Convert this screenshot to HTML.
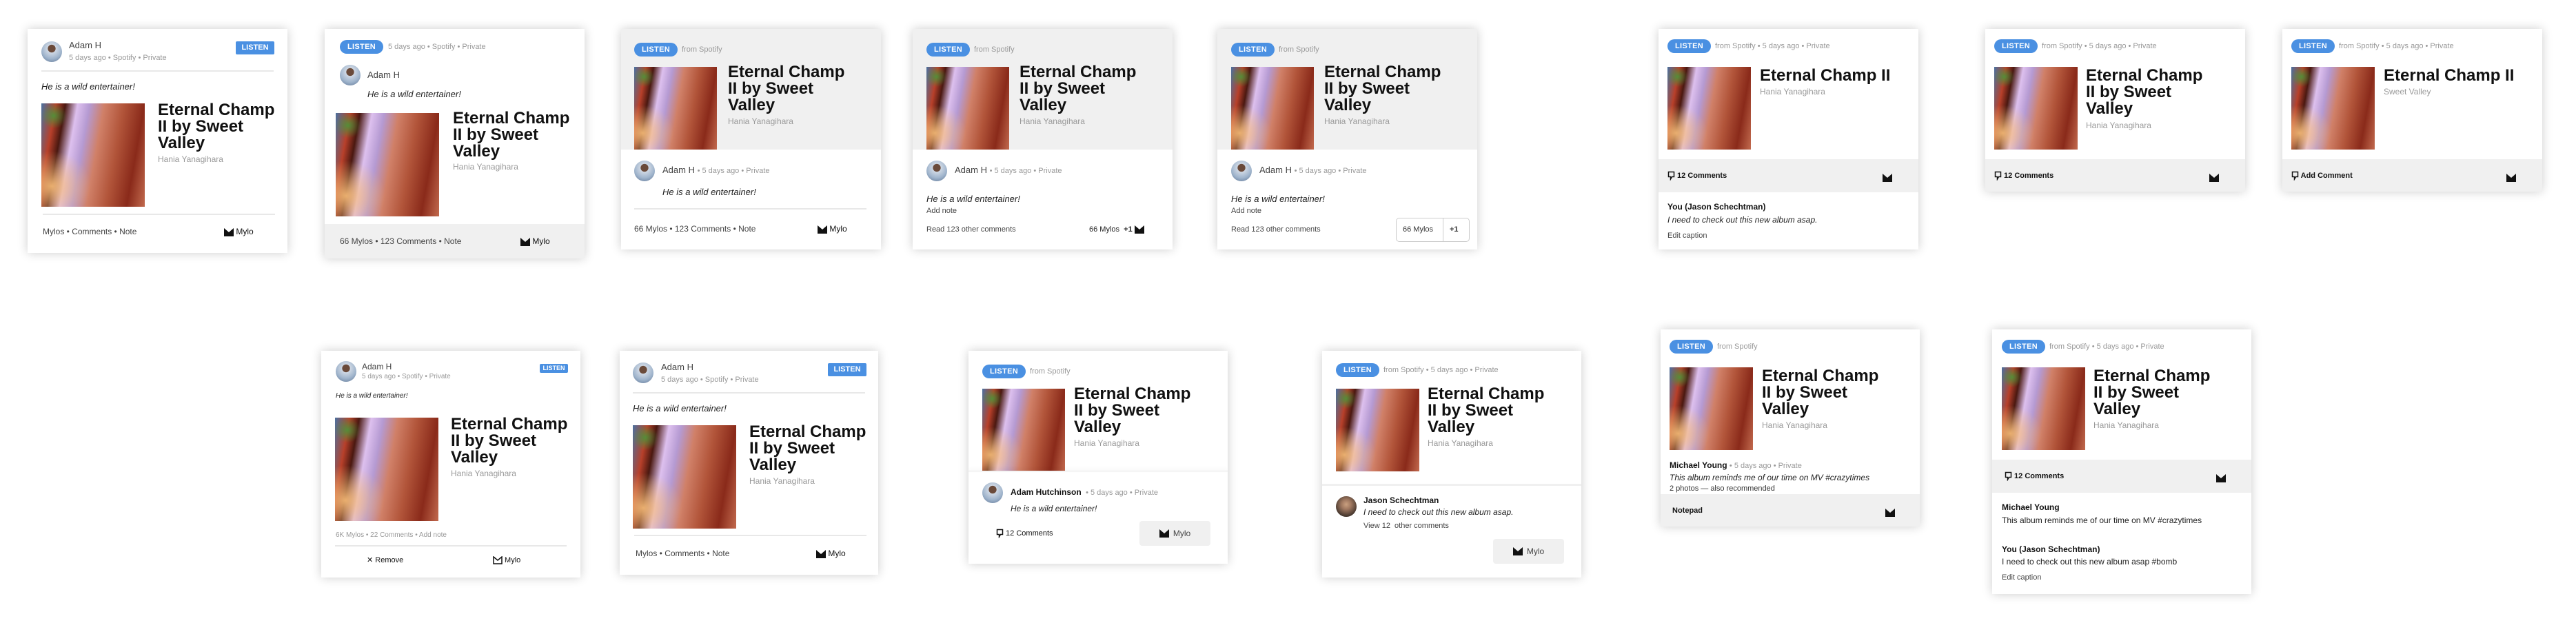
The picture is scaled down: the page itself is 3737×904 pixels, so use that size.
<!DOCTYPE html>
<html><head><meta charset="utf-8">
<style>
*{margin:0;padding:0;box-sizing:border-box}
body{width:3737px;height:904px;background:#fff;position:relative;overflow:hidden;font-family:"Liberation Sans",Arial,sans-serif;color:#222}
.c{position:absolute;background:#fff;box-shadow:0 0 14px rgba(0,0,0,.2);overflow:hidden}
.a{position:absolute}
.t{position:absolute;white-space:nowrap;font-size:11px;line-height:16px;color:#999}
.g{position:absolute;background:#f0f0f0;left:0;right:0}
.pill{position:absolute;background:#4a90e2;color:#fff;font-size:11px;font-weight:bold;border-radius:10px;height:20px;line-height:20px;text-align:center;width:63px;letter-spacing:.3px}
.box{position:absolute;background:#4a90e2;color:#fff;font-size:11px;font-weight:bold;text-align:center;border-radius:2px}
.img{position:absolute;background:
radial-gradient(circle at 12% 12%,rgba(60,160,60,.8) 0,rgba(60,160,60,0) 10%),
radial-gradient(ellipse at 10% 80%,rgba(250,190,120,.9) 0,rgba(250,190,120,0) 30%),
linear-gradient(100deg,#4a72a0 0%,#b8402a 12%,#4a1810 20%,#ddc0ee 30%,#b59ad2 40%,#d08068 52%,#b2553a 68%,#8a2a1a 85%,#c26a4e 100%)}
.av{position:absolute;width:30px;height:30px;border-radius:50%;background:radial-gradient(circle at 50% 35%,#6a4a3a 0,#6a4a3a 22%,#cfd8e4 24%,#9fb4cc 60%,#5a7090 100%)}
.ti{position:absolute;font-size:24px;line-height:24px;font-weight:bold;color:#111}
.au{position:absolute;font-size:12px;line-height:16px;color:#999;white-space:nowrap}
.nm{position:absolute;font-size:13px;line-height:16px;color:#444;white-space:nowrap}
.it{position:absolute;font-size:13px;line-height:16px;color:#222;font-style:italic;white-space:nowrap}
.ft{position:absolute;font-size:12px;line-height:16px;color:#444;white-space:nowrap}
.b{position:absolute;font-size:12px;line-height:16px;color:#111;font-weight:bold;white-space:nowrap}
.hr{position:absolute;height:2px;background:#e8e8e8}
.btn{position:absolute;background:#f0f0f0;border-radius:4px;font-size:12px;color:#444;display:flex;align-items:center;justify-content:center;gap:6px}
svg{display:inline-block;vertical-align:middle}
</style></head><body>

<!-- C1 -->
<div class="c" style="left:40px;top:42px;width:377px;height:325px">
 <div class="av" style="left:20px;top:18px"></div>
 <div class="nm" style="left:60px;top:16px">Adam H</div>
 <div class="t" style="left:60px;top:34px">5 days ago • Spotify • Private</div>
 <div class="box" style="left:302px;top:18px;width:56px;height:19px;line-height:19px">LISTEN</div>
 <div class="hr" style="left:20px;top:60px;width:337px"></div>
 <div class="it" style="left:20px;top:76px">He is a wild entertainer!</div>
 <div class="img" style="left:20px;top:108px;width:150px;height:150px"></div>
 <div class="ti" style="left:189px;top:106px">Eternal Champ<br>II by Sweet<br>Valley</div>
 <div class="au" style="left:189px;top:181px">Hania Yanagihara</div>
 <div class="hr" style="left:22px;top:268px;width:337px"></div>
 <div class="ft" style="left:22px;top:286px">Mylos • Comments • Note</div>
 <div class="ft" style="left:285px;top:286px;color:#111"><svg width="14" height="12"><path d="M0 0L7 6L14 0V12H0Z" fill="#111"/></svg> Mylo</div>
</div>

<!-- C2 -->
<div class="c" style="left:471px;top:42px;width:377px;height:333px">
 <div class="pill" style="left:22px;top:16px">LISTEN</div>
 <div class="t" style="left:92px;top:18px">5 days ago • Spotify • Private</div>
 <div class="av" style="left:22px;top:52px"></div>
 <div class="nm" style="left:62px;top:59px">Adam H</div>
 <div class="it" style="left:62px;top:87px">He is a wild entertainer!</div>
 <div class="img" style="left:16px;top:122px;width:150px;height:150px"></div>
 <div class="ti" style="left:186px;top:118px">Eternal Champ<br>II by Sweet<br>Valley</div>
 <div class="au" style="left:186px;top:192px">Hania Yanagihara</div>
 <div class="g" style="top:283px;height:50px"></div>
 <div class="ft" style="left:22px;top:300px">66 Mylos • 123 Comments • Note</div>
 <div class="ft" style="left:284px;top:300px;color:#111"><svg width="14" height="12"><path d="M0 0L7 6L14 0V12H0Z" fill="#111"/></svg> Mylo</div>
</div>

<!-- C3 -->
<div class="c" style="left:901px;top:42px;width:377px;height:320px">
 <div class="g" style="top:0;height:175px"></div>
 <div class="pill" style="left:19px;top:20px">LISTEN</div>
 <div class="t" style="left:88px;top:22px">from Spotify</div>
 <div class="img" style="left:19px;top:55px;width:120px;height:120px"></div>
 <div class="ti" style="left:155px;top:51px">Eternal Champ<br>II by Sweet<br>Valley</div>
 <div class="au" style="left:155px;top:126px">Hania Yanagihara</div>
 <div class="av" style="left:19px;top:191px"></div>
 <div class="nm" style="left:60px;top:197px">Adam H <span style="font-size:11px;color:#999">• 5 days ago • Private</span></div>
 <div class="it" style="left:60px;top:229px">He is a wild entertainer!</div>
 <div class="hr" style="left:19px;top:260px;width:337px"></div>
 <div class="ft" style="left:19px;top:282px">66 Mylos • 123 Comments • Note</div>
 <div class="ft" style="left:285px;top:282px;color:#111"><svg width="14" height="12"><path d="M0 0L7 6L14 0V12H0Z" fill="#111"/></svg> Mylo</div>
</div>

<!-- C4 -->
<div class="c" style="left:1324px;top:42px;width:377px;height:320px">
 <div class="g" style="top:0;height:175px"></div>
 <div class="pill" style="left:20px;top:20px">LISTEN</div>
 <div class="t" style="left:89px;top:22px">from Spotify</div>
 <div class="img" style="left:20px;top:55px;width:120px;height:120px"></div>
 <div class="ti" style="left:155px;top:51px">Eternal Champ<br>II by Sweet<br>Valley</div>
 <div class="au" style="left:155px;top:126px">Hania Yanagihara</div>
 <div class="av" style="left:20px;top:191px"></div>
 <div class="nm" style="left:61px;top:197px">Adam H <span style="font-size:11px;color:#999">• 5 days ago • Private</span></div>
 <div class="it" style="left:20px;top:239px">He is a wild entertainer!</div>
 <div class="ft" style="left:20px;top:256px;font-size:11px">Add note</div>
 <div class="ft" style="left:20px;top:283px;font-size:11px">Read 123 other comments</div>
 <div class="ft" style="left:256px;top:283px;font-size:11px;color:#222">66 Mylos &nbsp;<b>+1</b> <svg width="14" height="12"><path d="M0 0L7 6L14 0V12H0Z" fill="#111"/></svg></div>
</div>

<!-- C5 -->
<div class="c" style="left:1766px;top:42px;width:377px;height:320px">
 <div class="g" style="top:0;height:175px"></div>
 <div class="pill" style="left:20px;top:20px">LISTEN</div>
 <div class="t" style="left:89px;top:22px">from Spotify</div>
 <div class="img" style="left:20px;top:55px;width:120px;height:120px"></div>
 <div class="ti" style="left:155px;top:51px">Eternal Champ<br>II by Sweet<br>Valley</div>
 <div class="au" style="left:155px;top:126px">Hania Yanagihara</div>
 <div class="av" style="left:20px;top:191px"></div>
 <div class="nm" style="left:61px;top:197px">Adam H <span style="font-size:11px;color:#999">• 5 days ago • Private</span></div>
 <div class="it" style="left:20px;top:239px">He is a wild entertainer!</div>
 <div class="ft" style="left:20px;top:256px;font-size:11px">Add note</div>
 <div class="ft" style="left:20px;top:283px;font-size:11px">Read 123 other comments</div>
 <div class="a" style="left:259px;top:274px;width:107px;height:35px;border:1px solid #ccc;border-radius:5px;font-size:11px;color:#333;line-height:33px">
  <span style="position:absolute;left:9px">66 Mylos</span>
  <span style="position:absolute;left:67px;top:0;bottom:0;border-left:1px solid #ccc"></span>
  <span style="position:absolute;left:77px;font-weight:bold">+1</span>
 </div>
</div>

<!-- C6 -->
<div class="c" style="left:2406px;top:42px;width:377px;height:320px">
 <div class="pill" style="left:13px;top:15px">LISTEN</div>
 <div class="t" style="left:82px;top:17px">from Spotify • 5 days ago • Private</div>
 <div class="img" style="left:13px;top:55px;width:121px;height:120px"></div>
 <div class="ti" style="left:147px;top:56px">Eternal Champ II</div>
 <div class="au" style="left:147px;top:83px">Hania Yanagihara</div>
 <div class="g" style="top:189px;height:48px"></div>
 <div class="b" style="left:13px;top:205px;font-size:11px"><svg width="11" height="14"><path d="M1.5 1.5h8v7h-3l-2 3.5v-3.5h-3z" fill="none" stroke="#111" stroke-width="1.5"/></svg> 12 Comments</div>
 <div class="a" style="left:325px;top:207px"><svg width="14" height="12"><path d="M0 0L7 6L14 0V12H0Z" fill="#111"/></svg></div>
 <div class="b" style="left:13px;top:250px">You (Jason Schechtman)</div>
 <div class="it" style="left:13px;top:269px;font-size:12px">I need to check out this new album asap.</div>
 <div class="ft" style="left:13px;top:292px;font-size:11px">Edit caption</div>
</div>

<!-- C7 -->
<div class="c" style="left:2880px;top:42px;width:377px;height:236px">
 <div class="pill" style="left:13px;top:15px">LISTEN</div>
 <div class="t" style="left:82px;top:17px">from Spotify • 5 days ago • Private</div>
 <div class="img" style="left:13px;top:55px;width:121px;height:120px"></div>
 <div class="ti" style="left:146px;top:56px">Eternal Champ<br>II by Sweet<br>Valley</div>
 <div class="au" style="left:146px;top:132px">Hania Yanagihara</div>
 <div class="g" style="top:189px;height:47px"></div>
 <div class="b" style="left:13px;top:205px;font-size:11px"><svg width="11" height="14"><path d="M1.5 1.5h8v7h-3l-2 3.5v-3.5h-3z" fill="none" stroke="#111" stroke-width="1.5"/></svg> 12 Comments</div>
 <div class="a" style="left:325px;top:207px"><svg width="14" height="12"><path d="M0 0L7 6L14 0V12H0Z" fill="#111"/></svg></div>
</div>

<!-- C8 -->
<div class="c" style="left:3311px;top:42px;width:377px;height:236px">
 <div class="pill" style="left:13px;top:15px">LISTEN</div>
 <div class="t" style="left:82px;top:17px">from Spotify • 5 days ago • Private</div>
 <div class="img" style="left:13px;top:55px;width:121px;height:120px"></div>
 <div class="ti" style="left:147px;top:56px">Eternal Champ II</div>
 <div class="au" style="left:147px;top:83px">Sweet Valley</div>
 <div class="g" style="top:189px;height:47px"></div>
 <div class="b" style="left:13px;top:205px;font-size:11px"><svg width="11" height="14"><path d="M1.5 1.5h8v7h-3l-2 3.5v-3.5h-3z" fill="none" stroke="#111" stroke-width="1.5"/></svg> Add Comment</div>
 <div class="a" style="left:325px;top:207px"><svg width="14" height="12"><path d="M0 0L7 6L14 0V12H0Z" fill="#111"/></svg></div>
</div>

<!-- C9 -->
<div class="c" style="left:466px;top:509px;width:376px;height:329px">
 <div class="av" style="left:21px;top:15px"></div>
 <div class="nm" style="left:59px;top:15px;font-size:12px">Adam H</div>
 <div class="t" style="left:59px;top:30px;font-size:10px">5 days ago • Spotify • Private</div>
 <div class="box" style="left:317px;top:19px;width:41px;height:13px;line-height:13px;font-size:9px">LISTEN</div>
 <div class="it" style="left:21px;top:58px;font-size:10px">He is a wild entertainer!</div>
 <div class="img" style="left:20px;top:97px;width:150px;height:150px"></div>
 <div class="ti" style="left:188px;top:95px">Eternal Champ<br>II by Sweet<br>Valley</div>
 <div class="au" style="left:188px;top:170px">Hania Yanagihara</div>
 <div class="t" style="left:21px;top:260px;font-size:10px">6K Mylos • 22 Comments • Add note</div>
 <div class="hr" style="left:20px;top:282px;width:336px"></div>
 <div class="ft" style="left:66px;top:296px;font-size:11px;color:#111">✕ Remove</div>
 <div class="ft" style="left:249px;top:296px;font-size:11px;color:#111"><svg width="14" height="12"><path d="M1 1L7 6L13 1V11H1Z" fill="none" stroke="#111" stroke-width="1.5"/></svg> Mylo</div>
</div>

<!-- C10 -->
<div class="c" style="left:899px;top:509px;width:375px;height:325px">
 <div class="av" style="left:19px;top:17px"></div>
 <div class="nm" style="left:60px;top:16px">Adam H</div>
 <div class="t" style="left:60px;top:34px">5 days ago • Spotify • Private</div>
 <div class="box" style="left:302px;top:18px;width:56px;height:19px;line-height:19px">LISTEN</div>
 <div class="hr" style="left:19px;top:60px;width:337px"></div>
 <div class="it" style="left:19px;top:76px">He is a wild entertainer!</div>
 <div class="img" style="left:19px;top:108px;width:150px;height:150px"></div>
 <div class="ti" style="left:188px;top:106px">Eternal Champ<br>II by Sweet<br>Valley</div>
 <div class="au" style="left:188px;top:181px">Hania Yanagihara</div>
 <div class="hr" style="left:21px;top:267px;width:337px"></div>
 <div class="ft" style="left:23px;top:286px">Mylos • Comments • Note</div>
 <div class="ft" style="left:285px;top:286px;color:#111"><svg width="14" height="12"><path d="M0 0L7 6L14 0V12H0Z" fill="#111"/></svg> Mylo</div>
</div>

<!-- C11 -->
<div class="c" style="left:1405px;top:509px;width:376px;height:309px">
 <div class="pill" style="left:20px;top:20px">LISTEN</div>
 <div class="t" style="left:89px;top:22px">from Spotify</div>
 <div class="img" style="left:20px;top:55px;width:120px;height:120px"></div>
 <div class="ti" style="left:153px;top:51px">Eternal Champ<br>II by Sweet<br>Valley</div>
 <div class="au" style="left:153px;top:126px">Hania Yanagihara</div>
 <div class="a" style="left:0;right:0;top:174px;height:1px;background:#e4e4e4;box-shadow:0 -2px 6px rgba(0,0,0,.12)"></div>
 <div class="av" style="left:20px;top:191px"></div>
 <div class="b" style="left:61px;top:197px">Adam Hutchinson <span style="font-weight:normal;font-size:11px;color:#999">&nbsp;• 5 days ago • Private</span></div>
 <div class="it" style="left:61px;top:221px;font-size:12px">He is a wild entertainer!</div>
 <div class="ft" style="left:40px;top:257px;font-size:11px;color:#111"><svg width="11" height="14"><path d="M1.5 1.5h8v7h-3l-2 3.5v-3.5h-3z" fill="none" stroke="#111" stroke-width="1.5"/></svg> 12 Comments</div>
 <div class="btn" style="left:248px;top:247px;width:103px;height:36px"><svg width="14" height="12"><path d="M0 0L7 6L14 0V12H0Z" fill="#111"/></svg> Mylo</div>
</div>

<!-- C12 -->
<div class="c" style="left:1918px;top:509px;width:376px;height:329px">
 <div class="pill" style="left:20px;top:18px">LISTEN</div>
 <div class="t" style="left:89px;top:20px">from Spotify • 5 days ago • Private</div>
 <div class="img" style="left:20px;top:55px;width:121px;height:120px"></div>
 <div class="ti" style="left:153px;top:51px">Eternal Champ<br>II by Sweet<br>Valley</div>
 <div class="au" style="left:153px;top:126px">Hania Yanagihara</div>
 <div class="g" style="top:193px;height:3px"></div>
 <div class="av" style="left:20px;top:211px;background:radial-gradient(circle at 50% 40%,#caa080 0,#a07860 30%,#4a3a30 70%,#2a2220 100%)"></div>
 <div class="b" style="left:60px;top:209px">Jason Schechtman</div>
 <div class="it" style="left:60px;top:226px;font-size:12px">I need to check out this new album asap.</div>
 <div class="ft" style="left:60px;top:246px;font-size:11px">View 12 &nbsp;other comments</div>
 <div class="btn" style="left:248px;top:273px;width:103px;height:36px"><svg width="14" height="12"><path d="M0 0L7 6L14 0V12H0Z" fill="#111"/></svg> Mylo</div>
</div>

<!-- C13 -->
<div class="c" style="left:2409px;top:478px;width:376px;height:286px">
 <div class="pill" style="left:13px;top:15px">LISTEN</div>
 <div class="t" style="left:82px;top:17px">from Spotify</div>
 <div class="img" style="left:13px;top:55px;width:121px;height:120px"></div>
 <div class="ti" style="left:147px;top:56px">Eternal Champ<br>II by Sweet<br>Valley</div>
 <div class="au" style="left:147px;top:131px">Hania Yanagihara</div>
 <div class="b" style="left:13px;top:189px">Michael Young <span style="font-weight:normal;font-size:11px;color:#999">• 5 days ago • Private</span></div>
 <div class="it" style="left:13px;top:207px;font-size:12px">This album reminds me of our time on MV #crazytimes</div>
 <div class="ft" style="left:13px;top:223px;font-size:11px;color:#333">2 photos — also recommended</div>
 <div class="g" style="top:239px;height:47px"></div>
 <div class="b" style="left:17px;top:255px;font-size:11px">Notepad</div>
 <div class="a" style="left:326px;top:257px"><svg width="14" height="12"><path d="M0 0L7 6L14 0V12H0Z" fill="#111"/></svg></div>
</div>

<!-- C14 -->
<div class="c" style="left:2890px;top:478px;width:376px;height:384px">
 <div class="pill" style="left:14px;top:15px">LISTEN</div>
 <div class="t" style="left:83px;top:17px">from Spotify • 5 days ago • Private</div>
 <div class="img" style="left:14px;top:55px;width:121px;height:120px"></div>
 <div class="ti" style="left:147px;top:56px">Eternal Champ<br>II by Sweet<br>Valley</div>
 <div class="au" style="left:147px;top:131px">Hania Yanagihara</div>
 <div class="g" style="top:189px;height:48px"></div>
 <div class="b" style="left:18px;top:205px;font-size:11px"><svg width="11" height="14"><path d="M1.5 1.5h8v7h-3l-2 3.5v-3.5h-3z" fill="none" stroke="#111" stroke-width="1.5"/></svg> 12 Comments</div>
 <div class="a" style="left:325px;top:207px"><svg width="14" height="12"><path d="M0 0L7 6L14 0V12H0Z" fill="#111"/></svg></div>
 <div class="b" style="left:14px;top:250px">Michael Young</div>
 <div class="it" style="left:14px;top:269px;font-size:12px;font-style:normal">This album reminds me of our time on MV #crazytimes</div>
 <div class="b" style="left:14px;top:311px">You (Jason Schechtman)</div>
 <div class="it" style="left:14px;top:329px;font-size:12px;font-style:normal">I need to check out this new album asap #bomb</div>
 <div class="ft" style="left:14px;top:352px;font-size:11px">Edit caption</div>
</div>

</body></html>
